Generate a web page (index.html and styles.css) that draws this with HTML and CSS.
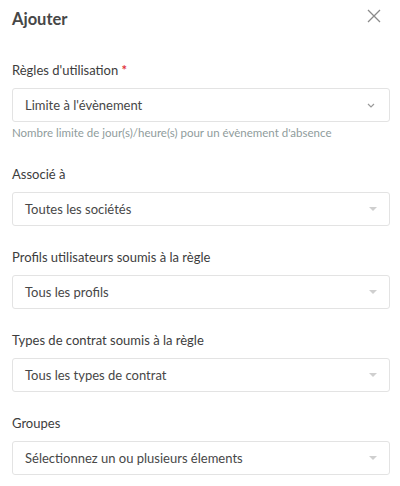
FILE: index.html
```html
<!DOCTYPE html>
<html lang="fr">
<head>
<meta charset="utf-8">
<link rel="stylesheet" href="styles.css">
</head>
<body>
<div class="panel">
  <header class="head">
    <h1 class="title">Ajouter</h1>
    <svg class="close" width="14" height="14" viewBox="0 0 14 14"><path d="M1 1L13 13M13 1L1 13" stroke="#8a8a8a" stroke-width="1.3" fill="none"/></svg>
  </header>
  <form class="form">
    <div class="field field-hint">
      <div class="label">Règles d'utilisation <span class="req">*</span></div>
      <div class="select">
        <span class="value">Limite à l'évènement</span>
        <svg class="chev" width="8" height="5" viewBox="0 0 8 5"><path d="M1 1L4 4L7 1" stroke="#9a9a9a" stroke-width="1.2" fill="none"/></svg>
      </div>
      <div class="hint">Nombre limite de jour(s)/heure(s) pour un évènement d'absence</div>
    </div>
    <div class="field">
      <div class="label">Associé à</div>
      <div class="select"><span class="value">Toutes les sociétés</span><span class="caret"></span></div>
    </div>
    <div class="field">
      <div class="label">Profils utilisateurs soumis à la règle</div>
      <div class="select"><span class="value">Tous les profils</span><span class="caret"></span></div>
    </div>
    <div class="field">
      <div class="label">Types de contrat soumis à la règle</div>
      <div class="select"><span class="value">Tous les types de contrat</span><span class="caret"></span></div>
    </div>
    <div class="field">
      <div class="label">Groupes</div>
      <div class="select"><span class="value">Sélectionnez un ou plusieurs élements</span><span class="caret"></span></div>
    </div>
  </form>
</div>
</body>
</html>
```
FILE: styles.css
```css
* { box-sizing: border-box; }
html, body { margin: 0; padding: 0; background: #fff; }
body { font-family: "Lato", "Open Sans", sans-serif; color: #444; }
.panel { padding: 0 10px 0 12px; }
.head { display: flex; align-items: center; justify-content: space-between; height: 38px; }
.title { margin: 0; font-size: 16.5px; font-weight: 700; color: #474747; }
.close { margin-right: 9px; margin-top: -6px; }
.form { display: flex; flex-direction: column; gap: 22px; margin-top: 23px; }
.field { display: flex; flex-direction: column; }
.field-hint { margin-bottom: 4px; }
.label { font-size: 13px; line-height: 18px; color: #3d3d3d; margin-bottom: 9px; }
.req { color: #e0333b; font-weight: 700; }
.select { height: 34px; border: 1px solid #e3e3e3; border-radius: 3px; display: flex; align-items: center; justify-content: space-between; padding: 0 10px 0 12px; }
.value { font-size: 13px; color: #474747; }
.chev { margin-right: 4px; }
.caret { width: 0; height: 0; border-left: 4px solid transparent; border-right: 4px solid transparent; border-top: 4px solid #cfcfcf; margin-right: 2px; }
.hint { font-size: 11.5px; line-height: 13px; color: #8f9c9c; margin-top: 4px; }
```
